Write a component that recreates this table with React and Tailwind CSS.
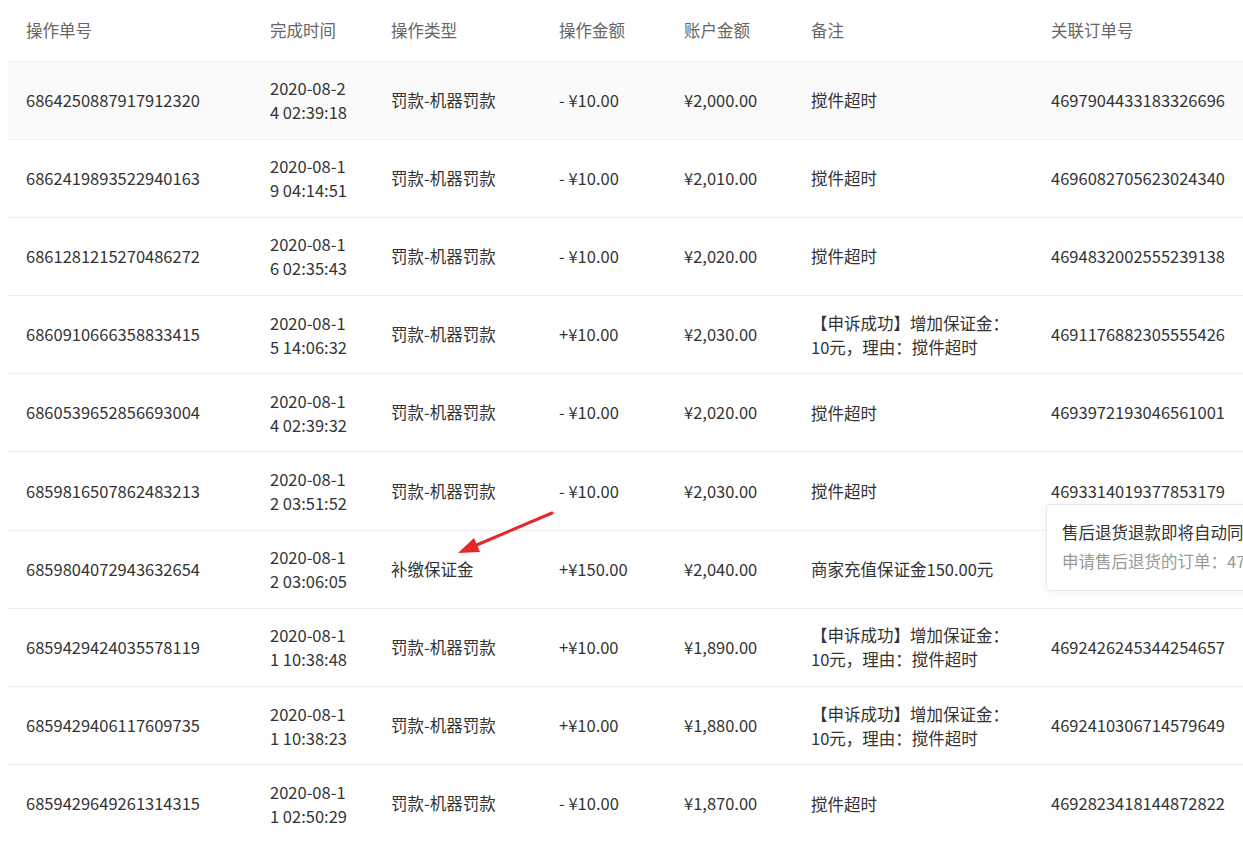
import React from 'react'

const rows = [
    { id: '6864250887917912320', time: '2020-08-24 02:39:18', type: '罚款-机器罚款', amount: '- ¥10.00', balance: '¥2,000.00', note: '搅件超时', order: '4697904433183326696' },
    { id: '6862419893522940163', time: '2020-08-19 04:14:51', type: '罚款-机器罚款', amount: '- ¥10.00', balance: '¥2,010.00', note: '搅件超时', order: '4696082705623024340' },
    { id: '6861281215270486272', time: '2020-08-16 02:35:43', type: '罚款-机器罚款', amount: '- ¥10.00', balance: '¥2,020.00', note: '搅件超时', order: '4694832002555239138' },
    { id: '6860910666358833415', time: '2020-08-15 14:06:32', type: '罚款-机器罚款', amount: '+¥10.00', balance: '¥2,030.00', note: '【申诉成功】增加保证金：10元，理由：搅件超时', order: '4691176882305555426' },
    { id: '6860539652856693004', time: '2020-08-14 02:39:32', type: '罚款-机器罚款', amount: '- ¥10.00', balance: '¥2,020.00', note: '搅件超时', order: '4693972193046561001' },
    { id: '6859816507862483213', time: '2020-08-12 03:51:52', type: '罚款-机器罚款', amount: '- ¥10.00', balance: '¥2,030.00', note: '搅件超时', order: '4693314019377853179' },
    { id: '6859804072943632654', time: '2020-08-12 03:06:05', type: '补缴保证金', amount: '+¥150.00', balance: '¥2,040.00', note: '商家充值保证金150.00元', order: '' },
    { id: '6859429424035578119', time: '2020-08-11 10:38:48', type: '罚款-机器罚款', amount: '+¥10.00', balance: '¥1,890.00', note: '【申诉成功】增加保证金：10元，理由：搅件超时', order: '4692426245344254657' },
    { id: '6859429406117609735', time: '2020-08-11 10:38:23', type: '罚款-机器罚款', amount: '+¥10.00', balance: '¥1,880.00', note: '【申诉成功】增加保证金：10元，理由：搅件超时', order: '4692410306714579649' },
    { id: '6859429649261314315', time: '2020-08-11 02:50:29', type: '罚款-机器罚款', amount: '- ¥10.00', balance: '¥1,870.00', note: '搅件超时', order: '4692823418144872822' },
]

const heads = ['操作单号', '完成时间', '操作类型', '操作金额', '账户金额', '备注', '关联订单号']
const widths = ['w-[244px]', 'w-[121px]', 'w-[168px]', 'w-[125px]', 'w-[127px]', 'w-[240px]', 'w-[235px]']

export default function App() {
    return (
        <div className="relative w-[1243px] h-[842px] overflow-hidden bg-white pl-[8px] text-[16.5px] text-[#333] font-['Noto_Sans_CJK_SC','Noto_Sans',sans-serif]">
            <table className="table-fixed w-[1260px] border-collapse">
                <colgroup>
                    {widths.map((w, i) => <col key={i} className={w} />)}
                </colgroup>
                <thead>
                    <tr className="h-[61px] border-b border-[#eeeeee]">
                        {heads.map((h) => (
                            <th key={h} className="px-[18px] pt-[1px] text-left font-normal text-[#666]">{h}</th>
                        ))}
                    </tr>
                </thead>
                <tbody>
                    {rows.map((r, i) => (
                        <tr key={r.id} className={`h-[78.2px] border-b border-[#eeeeee] ${i === 0 ? 'bg-[#fafafa]' : ''}`}>
                            <td className="px-[18px]">{r.id}</td>
                            <td className="pl-[18px] pr-[20px] leading-[24px] break-all">{r.time}</td>
                            <td className="px-[18px]">{r.type}</td>
                            <td className="px-[18px]">{r.amount}</td>
                            <td className="px-[18px]">{r.balance}</td>
                            <td className="pl-[18px] pr-[16px] leading-[24px]">{r.note}</td>
                            <td className="px-[18px]">{r.order}</td>
                        </tr>
                    ))}
                </tbody>
            </table>

            {/* 悬浮提示，右侧被窗口裁掉 */}
            <div className="absolute left-[1046px] top-[504px] w-[320px] h-[87px] bg-white border border-[#e8e8e8] rounded-[4px] shadow-[0_2px_8px_rgba(0,0,0,0.06)] pl-[15px] pt-[13px] whitespace-nowrap">
                <div className="leading-[28px] text-[#333]">售后退货退款即将自动同意</div>
                <div className="leading-[30px] text-[#999]">申请售后退货的订单：4700012345678901</div>
            </div>

            {/* 红色箭头 */}
            <svg className="absolute left-0 top-0 pointer-events-none" width="1243" height="842">
                <line x1="552" y1="513" x2="472" y2="547" stroke="#e62727" strokeWidth="3" strokeLinecap="round" />
                <polygon points="458,553 474,538 480,552" fill="#e62727" />
            </svg>
        </div>
    )
}
